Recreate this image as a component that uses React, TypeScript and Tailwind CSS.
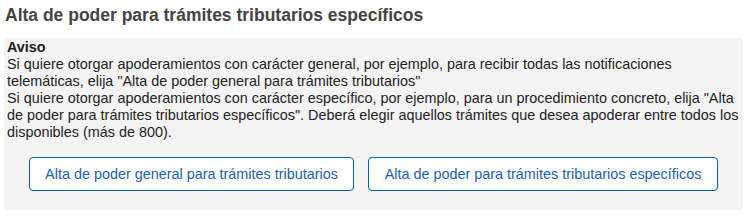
export default function App() {
  return (
    <div
      className="h-[216px] w-[750px] bg-white px-[4px] pt-[3px]"
      style={{ fontFamily: '"Liberation Sans", Arial, sans-serif' }}
    >
      <h1 className="pl-[1px] text-[17.5px] leading-[24px] font-bold text-[#444]">
        Alta de poder para trámites tributarios específicos
      </h1>

      {/* Aviso */}
      <div className="mt-[11px] w-[739px] rounded-[4px] bg-[#f4f4f4] pt-[1px] pr-[1px] pb-[19px] pl-[3px] text-[14.4px] leading-[17px] text-[#222]">
        <div className="font-bold">Aviso</div>
        <p>
          Si quiere otorgar apoderamientos con carácter general, por ejemplo,
          para recibir todas las notificaciones telemáticas, elija "Alta de
          poder general para trámites tributarios"
        </p>
        <p>
          Si quiere otorgar apoderamientos con carácter específico, por
          ejemplo, para un procedimiento concreto, elija "Alta de poder para
          trámites tributarios específicos". Deberá elegir aquellos trámites
          que desea apoderar entre todos los disponibles (más de 800).
        </p>

        <div className="mt-[16px] flex justify-center gap-[14px] pr-[2px]">
          <button className="h-[34px] w-[325px] rounded-[4px] border border-[#0a5eb5] bg-white text-[14.4px] text-[#1b5fb4]">
            Alta de poder general para trámites tributarios
          </button>
          <button className="h-[34px] w-[350px] rounded-[4px] border border-[#0a5eb5] bg-white text-[14.4px] text-[#1b5fb4]">
            Alta de poder para trámites tributarios específicos
          </button>
        </div>
      </div>
    </div>
  );
}
